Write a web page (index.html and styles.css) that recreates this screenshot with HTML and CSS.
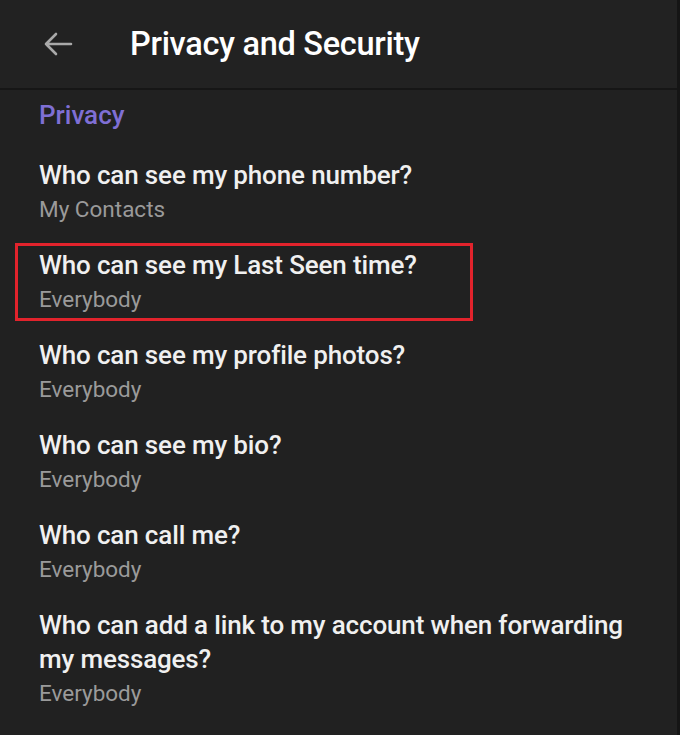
FILE: index.html
```html
<!DOCTYPE html>
<html lang="en">
<head>
    <meta charset="UTF-8">
    <meta name="viewport" content="width=device-width, initial-scale=1.0">
    <title>Privacy and Security</title>
    <link rel="stylesheet" href="styles.css">
</head>
<body>
    <div class="screen">
        <header class="topbar">
            <button class="back" aria-label="Back">
                <svg width="30" height="24" viewBox="0 0 30 24">
                    <path d="M28 12H3M13 2L3 12l10 10" fill="none" stroke="#a9a9a9" stroke-width="2.6" stroke-linecap="round" stroke-linejoin="round"/>
                </svg>
            </button>
            <h1>Privacy and Security</h1>
        </header>

        <div class="content">
            <h2 class="section">Privacy</h2>

            <div class="item">
                <div class="title">Who can see my phone number?</div>
                <div class="value">My Contacts</div>
            </div>
            <div class="item highlight">
                <div class="title">Who can see my Last Seen time?</div>
                <div class="value">Everybody</div>
            </div>
            <div class="item">
                <div class="title">Who can see my profile photos?</div>
                <div class="value">Everybody</div>
            </div>
            <div class="item">
                <div class="title">Who can see my bio?</div>
                <div class="value">Everybody</div>
            </div>
            <div class="item">
                <div class="title">Who can call me?</div>
                <div class="value">Everybody</div>
            </div>
            <div class="item">
                <div class="title">Who can add a link to my account when forwarding my messages?</div>
                <div class="value">Everybody</div>
            </div>
        </div>
    </div>
</body>
</html>
```

FILE: styles.css
```css
html, body {
    margin: 0;
    padding: 0;
    background: #212121;
}
body {
    font-family: Roboto, "Noto Sans", sans-serif;
    color: #f2f2f2;
}
.screen {
    width: 677px;
    height: 735px;
    border-right: 3px solid #151515;
    background: #212121;
    overflow: hidden;
}
.topbar {
    display: flex;
    align-items: center;
    height: 88px;
    border-bottom: 2px solid #161616;
    background: #222222;
}
.back {
    background: none;
    border: none;
    padding: 0;
    margin-left: 43px;
    width: 30px;
    height: 24px;
    display: flex;
}
.topbar h1 {
    margin: 0 0 0 57px;
    font-size: 32.5px;
    font-weight: 500;
    color: #ffffff;
    letter-spacing: -0.3px;
}
.content {
    padding: 0 0 0 39px;
}
.section {
    margin: 0;
    padding-top: 10px;
    height: 42px;
    font-size: 26px;
    font-weight: 500;
    color: #7f6fd4;
    line-height: 30px;
}
.item {
    padding: 16px 0 6px;
}
.item .title {
    font-size: 26px;
    font-weight: 500;
    line-height: 34px;
    color: #f0f0f0;
    letter-spacing: -0.15px;
    max-width: 600px;
}
.item .value {
    font-size: 22.5px;
    line-height: 34px;
    color: #9a9a9a;
}
.highlight {
    position: relative;
}
.highlight::before {
    content: "";
    position: absolute;
    left: -24px;
    top: 11px;
    width: 452px;
    height: 72px;
    border: 3.5px solid #e2232c;
}
```
